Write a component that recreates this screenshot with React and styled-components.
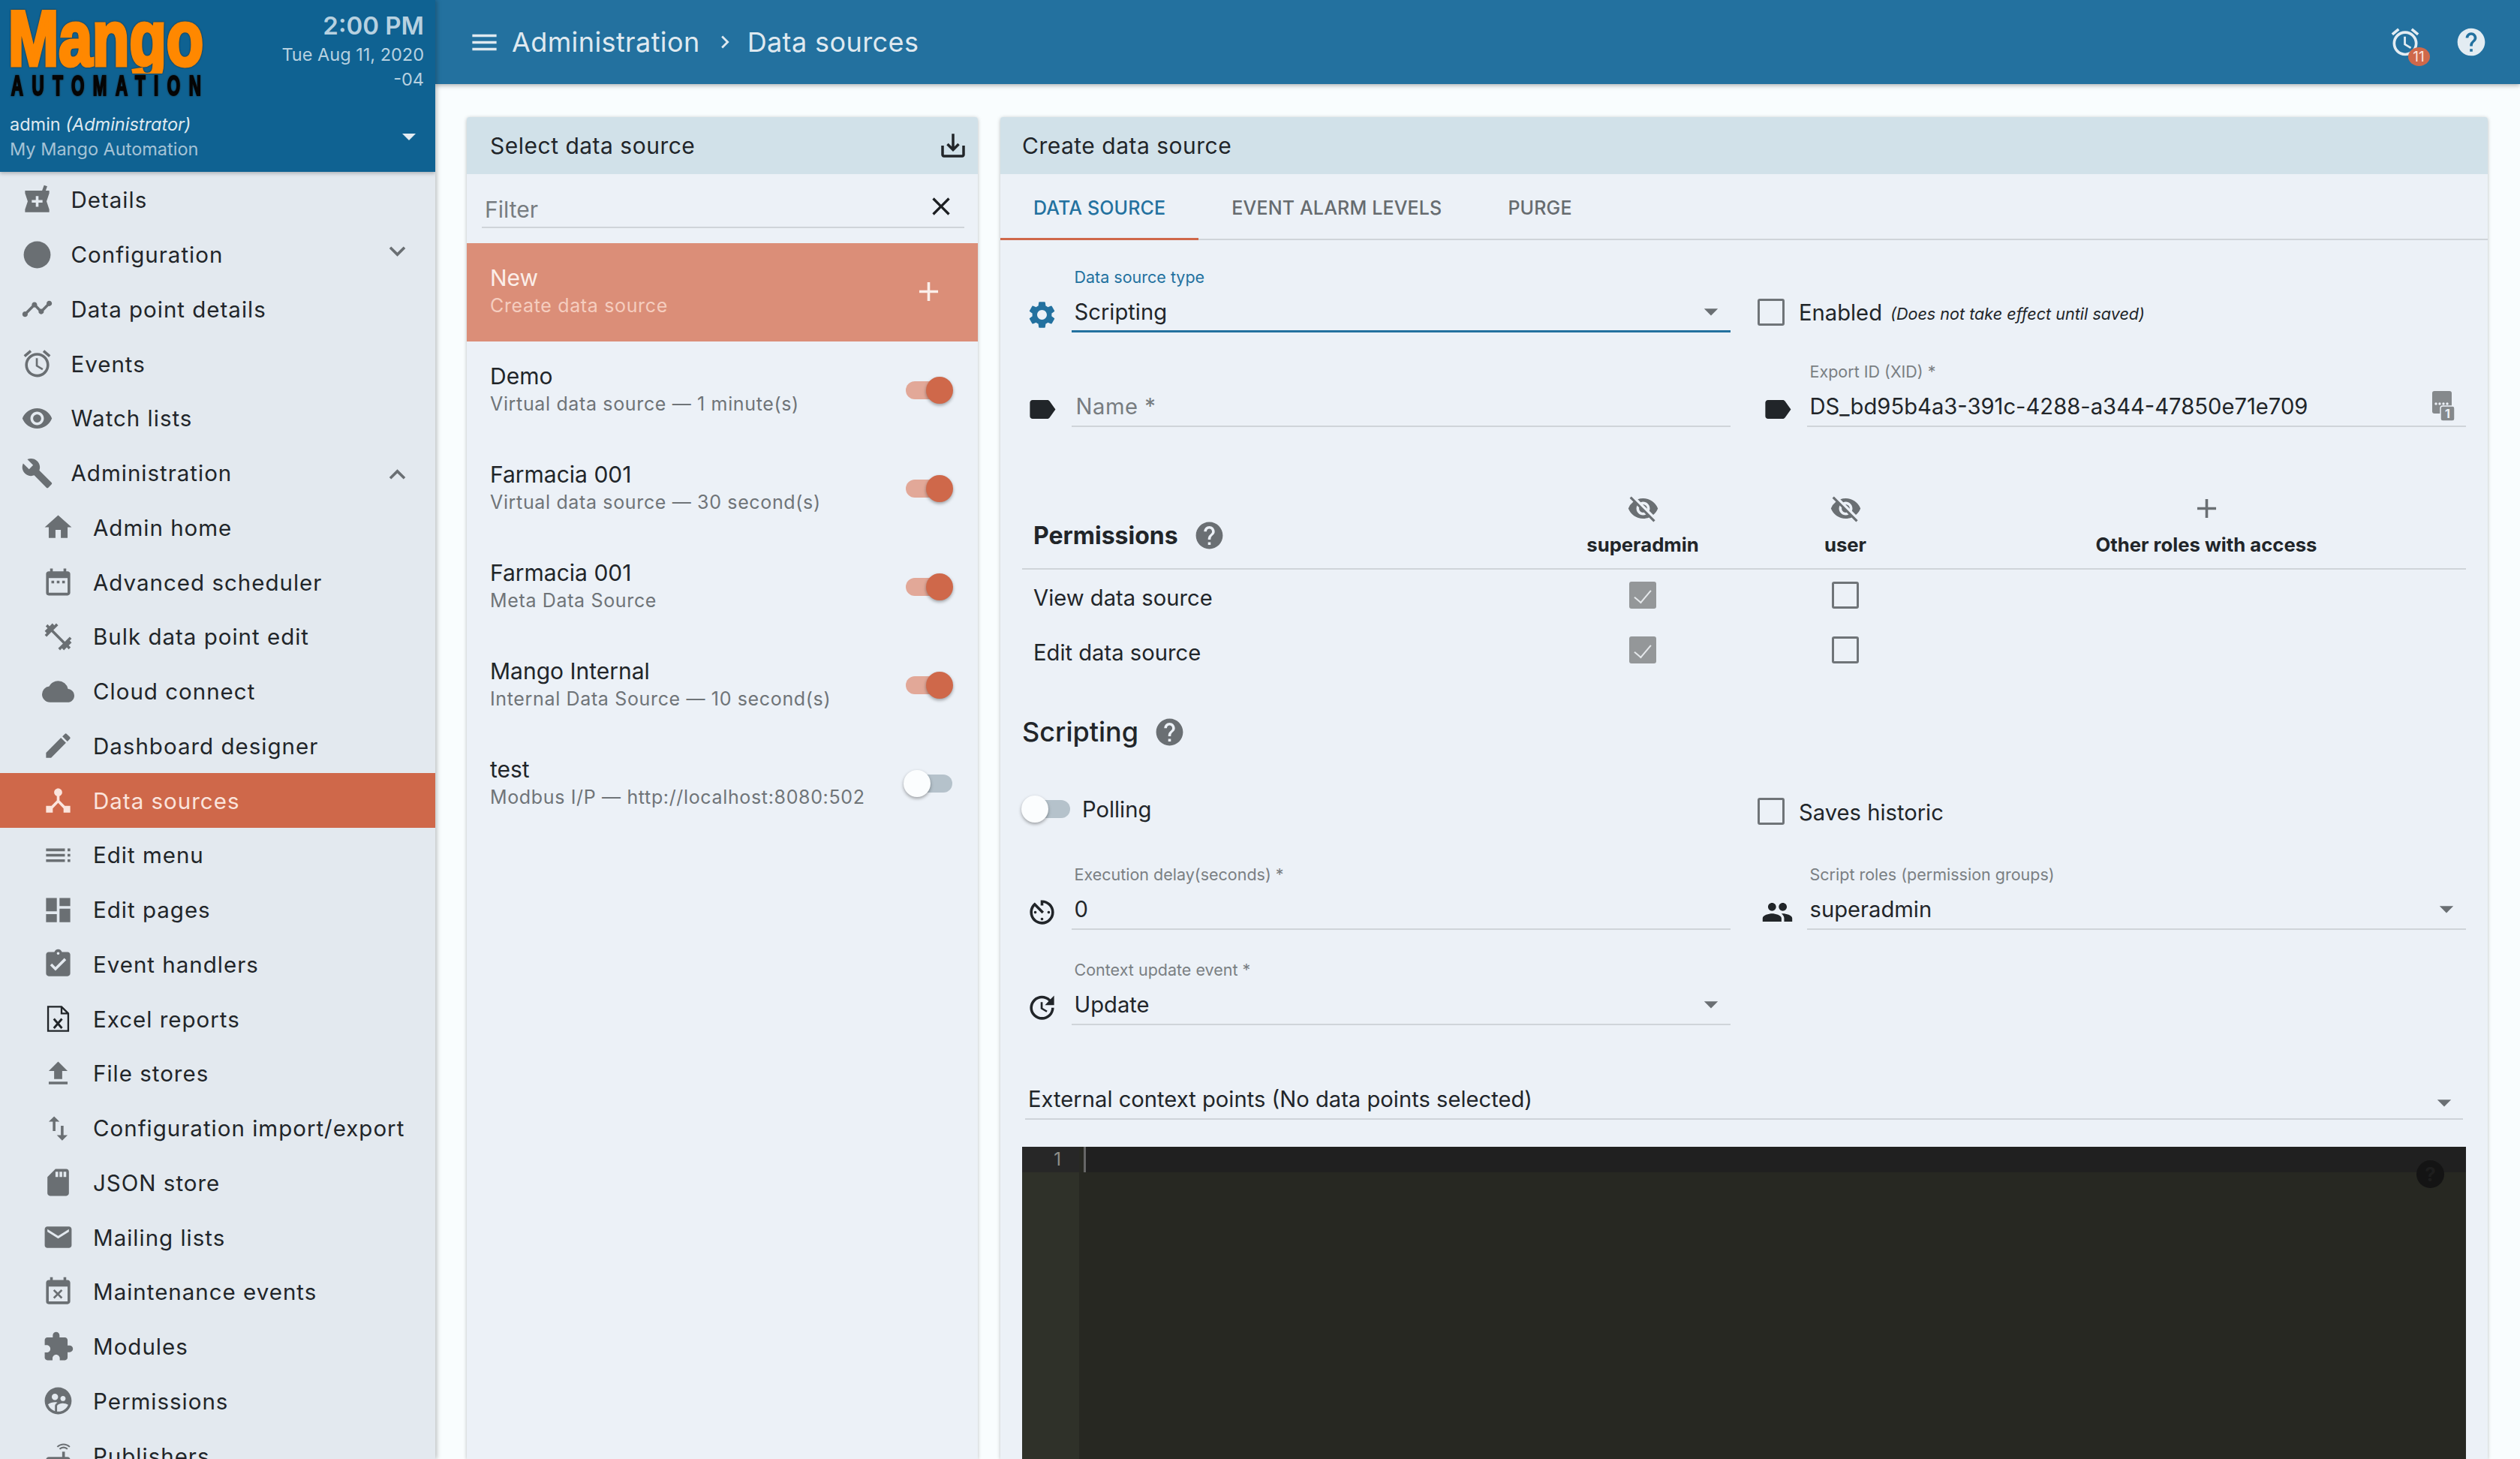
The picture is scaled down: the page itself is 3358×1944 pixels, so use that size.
import React from "react";
import styled, { createGlobalStyle } from "styled-components";
import {
  MdLocalPharmacy, MdLens, MdTimeline, MdAccessAlarm, MdRemoveRedEye, MdBuild, MdExpandMore, MdExpandLess,
  MdHome, MdDateRange, MdFitnessCenter, MdCloud, MdEdit, MdDeviceHub, MdToc, MdDashboard, MdAssignmentTurnedIn,
  MdFileUpload, MdImportExport, MdSdStorage, MdEmail, MdEventBusy, MdExtension, MdSupervisedUserCircle, MdRouter,
  MdMenu, MdChevronRight, MdHelp, MdSaveAlt, MdClose, MdAdd, MdSettings, MdLabel, MdVisibilityOff, MdAvTimer,
  MdUpdate, MdGroup, MdArrowDropDown,
} from "react-icons/md";

const GlobalStyle = createGlobalStyle`
  html, body { margin: 0; padding: 0; background: #f9fdfe; overflow: hidden; }
  * { box-sizing: border-box; }
  body { font-family: Inter, "Noto Sans", sans-serif; color: #212529; }
`;

const ExcelIcon = (props) => (
  <svg viewBox="0 0 24 24" width="1em" height="1em" {...props}>
    <path d="M4.5 3h10l5 5v13h-15z M14.5 3v5h5" fill="none" stroke="#212529" strokeWidth="1.3" />
    <path d="M8.8 12l6 7M14.8 12l-6 7" stroke="#212529" strokeWidth="1.6" fill="none" />
  </svg>
);

const XidIcon = () => (
  <svg viewBox="0 0 32 40" width="32" height="40">
    <rect x="0" y="0" width="26" height="30" rx="3" fill="#85898c" />
    <circle cx="5" cy="17" r="1.7" fill="#ecf1f7" />
    <circle cx="10" cy="17" r="1.7" fill="#ecf1f7" />
    <circle cx="15" cy="17" r="1.7" fill="#ecf1f7" />
    <circle cx="20" cy="17" r="1.7" fill="#ecf1f7" />
    <rect x="11" y="20" width="19" height="20" rx="3" fill="#85898c" stroke="#ecf1f7" strokeWidth="1.5" />
    <text x="20.5" y="36" fontFamily="Inter, sans-serif" fontWeight="700" fontSize="16" fill="#ecf1f7" textAnchor="middle">1</text>
  </svg>
);

const Logo = () => (
  <LogoSvg viewBox="0 0 270 125" width="270" height="125">
    <defs>
      <clipPath id="mango-clip">
        <rect x="-5" y="-5" width="280" height="92" rx="6" />
      </clipPath>
    </defs>
    <g clipPath="url(#mango-clip)">
      <text x="-2" y="76" fontFamily="Liberation Sans, sans-serif" fontWeight="700" fontSize="104" textLength="260" lengthAdjust="spacingAndGlyphs" fill="#ff8800" stroke="#ff8800" strokeWidth="5">Mango</text>
    </g>
    <g transform="scale(0.62,1)">
      <text x="3" y="116" fontFamily="Liberation Sans, sans-serif" fontWeight="700" fontSize="36" textLength="408" lengthAdjust="spacing" fill="#050505" stroke="#050505" strokeWidth="2">AUTOMATION</text>
    </g>
  </LogoSvg>
);

const navItems = [
  { icon: MdLocalPharmacy, label: "Details" },
  { icon: MdLens, label: "Configuration", chevron: "down" },
  { icon: MdTimeline, label: "Data point details" },
  { icon: MdAccessAlarm, label: "Events" },
  { icon: MdRemoveRedEye, label: "Watch lists" },
  { icon: MdBuild, label: "Administration", chevron: "up" },
  { icon: MdHome, label: "Admin home", sub: true },
  { icon: MdDateRange, label: "Advanced scheduler", sub: true },
  { icon: MdFitnessCenter, label: "Bulk data point edit", sub: true },
  { icon: MdCloud, label: "Cloud connect", sub: true },
  { icon: MdEdit, label: "Dashboard designer", sub: true },
  { icon: MdDeviceHub, label: "Data sources", sub: true, active: true },
  { icon: MdToc, label: "Edit menu", sub: true },
  { icon: MdDashboard, label: "Edit pages", sub: true },
  { icon: MdAssignmentTurnedIn, label: "Event handlers", sub: true },
  { icon: ExcelIcon, label: "Excel reports", sub: true },
  { icon: MdFileUpload, label: "File stores", sub: true },
  { icon: MdImportExport, label: "Configuration import/export", sub: true },
  { icon: MdSdStorage, label: "JSON store", sub: true },
  { icon: MdEmail, label: "Mailing lists", sub: true },
  { icon: MdEventBusy, label: "Maintenance events", sub: true },
  { icon: MdExtension, label: "Modules", sub: true },
  { icon: MdSupervisedUserCircle, label: "Permissions", sub: true },
  { icon: MdRouter, label: "Publishers", sub: true },
];

const sources = [
  { name: "Demo", desc: "Virtual data source — 1 minute(s)", on: true },
  { name: "Farmacia 001", desc: "Virtual data source — 30 second(s)", on: true },
  { name: "Farmacia 001", desc: "Meta Data Source", on: true },
  { name: "Mango Internal", desc: "Internal Data Source — 10 second(s)", on: true },
  { name: "test", desc: "Modbus I/P — http://localhost:8080:502", on: false },
];

const Field = ({ icon: Icon, iconColor, label, value, placeholder, arrow, focused, trailing }) => (
  <FieldWrap>
    <FieldIcon $color={iconColor}><Icon /></FieldIcon>
    <FieldBody $focused={focused}>
      <FieldLabel $focused={focused}>{label}</FieldLabel>
      <FieldValue $placeholder={!!placeholder}>
        <span>{value || placeholder}</span>
        {arrow && <DropArrow><MdArrowDropDown /></DropArrow>}
        {trailing}
      </FieldValue>
    </FieldBody>
  </FieldWrap>
);

const App = () => (
  <>
    <GlobalStyle />
    <Shell>
      <Sidebar>
        <SideHeader>
          <LogoRow>
            <Logo />
            <Clock>
              <Time>2:00 PM</Time>
              <DateText>Tue Aug 11, 2020</DateText>
              <DateText>-04</DateText>
            </Clock>
          </LogoRow>
          <UserRow>
            <div>
              <UserName>admin <em>(Administrator)</em></UserName>
              <SiteName>My Mango Automation</SiteName>
            </div>
            <UserCaret />
          </UserRow>
        </SideHeader>
        <Nav>
          {navItems.map(({ icon: Icon, label, sub, active, chevron }) => (
            <NavRow key={label} $sub={sub} $active={active}>
              <NavIcon $sub={sub} $active={active}><Icon /></NavIcon>
              <span>{label}</span>
              {chevron && <NavChevron $up={chevron === "up"}>{chevron === "up" ? <MdExpandLess /> : <MdExpandMore />}</NavChevron>}
            </NavRow>
          ))}
        </Nav>
      </Sidebar>

      <Main>
        <Toolbar>
          <MenuIcon><MdMenu /></MenuIcon>
          <Crumb>Administration</Crumb>
          <CrumbSep><MdChevronRight /></CrumbSep>
          <Crumb>Data sources</Crumb>
          <ToolbarRight>
            <AlarmButton>
              <MdAccessAlarm />
              <AlarmBadge>11</AlarmBadge>
            </AlarmButton>
            <HelpButton><MdHelp /></HelpButton>
          </ToolbarRight>
        </Toolbar>

        <Content>
          <Panel>
            <PanelHeader>
              <span>Select data source</span>
              <HeaderAction><MdSaveAlt /></HeaderAction>
            </PanelHeader>
            <FilterRow>
              <FilterText>Filter</FilterText>
              <FilterClear><MdClose /></FilterClear>
            </FilterRow>
            <NewRow>
              <SourceText>
                <NewName>New</NewName>
                <NewDesc>Create data source</NewDesc>
              </SourceText>
              <NewPlus><MdAdd /></NewPlus>
            </NewRow>
            {sources.map((s) => (
              <SourceRow key={s.name + s.desc}>
                <SourceText>
                  <SourceName>{s.name}</SourceName>
                  <SourceDesc>{s.desc}</SourceDesc>
                </SourceText>
                <Toggle $on={s.on} />
              </SourceRow>
            ))}
          </Panel>

          <Panel>
            <PanelHeader $wide>
              <span>Create data source</span>
            </PanelHeader>
            <Tabs>
              <Tab $active>Data source</Tab>
              <Tab>Event alarm levels</Tab>
              <Tab>Purge</Tab>
            </Tabs>
            <Form>
              <TwoCols>
                <Field icon={MdSettings} iconColor="#23719f" label="Data source type" value="Scripting" arrow focused />
                <CheckRow>
                  <Check />
                  <CheckLabel>Enabled</CheckLabel>
                  <CheckNote>(Does not take effect until saved)</CheckNote>
                </CheckRow>
              </TwoCols>
              <NameRow>
                <Field icon={MdLabel} placeholder="Name *" />
                <Field icon={MdLabel} label="Export ID (XID) *" value="DS_bd95b4a3-391c-4288-a344-47850e71e709" trailing={<XidButton><XidIcon /></XidButton>} />
              </NameRow>

              <PermTable>
                <PermHead>
                  <PermTitle>Permissions <HelpMark><MdHelp /></HelpMark></PermTitle>
                  <RoleHead><RoleIcon><MdVisibilityOff /></RoleIcon>superadmin</RoleHead>
                  <RoleHead><RoleIcon><MdVisibilityOff /></RoleIcon>user</RoleHead>
                  <RoleHead><RoleIcon><MdAdd /></RoleIcon>Other roles with access</RoleHead>
                </PermHead>
                <PermRow>
                  <span>View data source</span>
                  <PermCell><Check $checked /></PermCell>
                  <PermCell><Check /></PermCell>
                </PermRow>
                <PermRow>
                  <span>Edit data source</span>
                  <PermCell><Check $checked /></PermCell>
                  <PermCell><Check /></PermCell>
                </PermRow>
              </PermTable>

              <SectionTitle>Scripting <HelpMark><MdHelp /></HelpMark></SectionTitle>

              <PollingRow>
                <PollingCell>
                  <FormToggle />
                  <span>Polling</span>
                </PollingCell>
                <SavesCell>
                  <Check />
                  <CheckLabel>Saves historic</CheckLabel>
                </SavesCell>
              </PollingRow>

              <DelayRow>
                <Field icon={MdAvTimer} label="Execution delay(seconds) *" value="0" />
                <Field icon={MdGroup} label="Script roles (permission groups)" value="superadmin" arrow />
              </DelayRow>
              <ContextRow>
                <Field icon={MdUpdate} label="Context update event *" value="Update" arrow />
              </ContextRow>

              <ExternalRow>
                <span>External context points (No data points selected)</span>
                <ExternalArrow><MdArrowDropDown /></ExternalArrow>
              </ExternalRow>

              <Editor>
                <Gutter>
                  <GutterActive>1</GutterActive>
                </Gutter>
                <EditorBody>
                  <ActiveLine />
                  <EditorHelp>?</EditorHelp>
                </EditorBody>
              </Editor>
            </Form>
          </Panel>
        </Content>
      </Main>
    </Shell>
  </>
);

export default App;

const Shell = styled.div`
  display: grid;
  grid-template-columns: 580px 1fr;
  width: 3358px;
  height: 1944px;
  overflow: hidden;
`;

const Sidebar = styled.aside`
  background: #e3e9ef;
  box-shadow: 2px 0 6px rgba(0, 0, 0, 0.25);
  z-index: 3;
  overflow: hidden;
`;

const SideHeader = styled.header`
  height: 229px;
  background: #0f6292;
  box-shadow: 0 2px 5px rgba(0, 0, 0, 0.25);
  position: relative;
  padding: 11px 15px 0 13px;
`;

const LogoRow = styled.div`
  display: flex;
  justify-content: space-between;
  height: 138px;
`;

const LogoSvg = styled.svg`
  display: block;
  flex: none;
  filter: drop-shadow(0 0 1px rgba(30, 30, 30, 0.8));
`;

const Clock = styled.div`
  text-align: right;
  padding-top: 3px;
`;

const Time = styled.div`
  font-size: 33px;
  line-height: 40px;
  font-weight: 600;
  color: #b7d1e0;
  margin-bottom: 2px;
`;

const DateText = styled.div`
  font-size: 23.5px;
  line-height: 33px;
  color: #b7d1e0;
`;

const UserRow = styled.div`
  display: flex;
  justify-content: space-between;
  align-items: center;
  padding-right: 11px;
`;

const UserName = styled.div`
  font-size: 23.5px;
  line-height: 33px;
  color: #dfe9f0;
`;

const SiteName = styled.div`
  font-size: 23.5px;
  line-height: 33px;
  color: #a5c3d6;
`;

const UserCaret = styled.div`
  width: 0;
  height: 0;
  border-left: 9px solid transparent;
  border-right: 9px solid transparent;
  border-top: 9px solid #e3ecf2;
`;

const Nav = styled.nav`
  display: flex;
  flex-direction: column;
  padding-top: 1px;
`;

const NavRow = styled.div`
  flex: none;
  height: 72.75px;
  display: flex;
  align-items: center;
  position: relative;
  padding-left: ${(p) => (p.$sub ? "55.5px" : "27.5px")};
  font-size: 29.5px;
  letter-spacing: 1px;
  background: ${(p) => (p.$active ? "#cf684a" : "transparent")};
  color: ${(p) => (p.$active ? "#fbe4dc" : "#212529")};
`;

const NavIcon = styled.span`
  flex: none;
  width: 43px;
  height: 43px;
  margin-right: ${(p) => (p.$sub ? "25.5px" : "24px")};
  font-size: 43px;
  display: flex;
  color: ${(p) => (p.$active ? "#fbe4dc" : "#6a6f73")};
`;

const NavChevron = styled.span`
  position: absolute;
  left: 508px;
  top: ${(p) => (p.$up ? "17px" : "10px")};
  font-size: 43px;
  color: #6a6f73;
  display: flex;
`;

const Main = styled.main`
  display: flex;
  flex-direction: column;
  min-width: 0;
  height: 1944px;
`;

const Toolbar = styled.div`
  flex: none;
  height: 112px;
  background: #23719f;
  box-shadow: 0 2px 6px rgba(0, 0, 0, 0.3);
  z-index: 2;
  display: flex;
  align-items: center;
  padding-left: 44px;
  color: #dfe9f0;
  font-size: 36px;
`;

const MenuIcon = styled.span`
  font-size: 43px;
  display: flex;
  margin-right: 15px;
`;

const Crumb = styled.span`
  letter-spacing: 0.4px;
`;

const CrumbSep = styled.span`
  font-size: 34px;
  display: flex;
  margin: 0 13px 0 16px;
`;

const ToolbarRight = styled.div`
  margin-left: auto;
  display: flex;
  align-items: center;
  gap: 44px;
  padding-right: 43px;
`;

const AlarmButton = styled.span`
  position: relative;
  display: flex;
  font-size: 44px;
  color: #e3ecf2;
`;

const AlarmBadge = styled.span`
  position: absolute;
  left: 25.5px;
  top: 29px;
  width: 29px;
  height: 25px;
  border-radius: 50%;
  background: #cf684a;
  color: #fbe4dc;
  font-size: 19px;
  line-height: 25px;
  text-align: center;
`;

const HelpButton = styled.span`
  display: flex;
  font-size: 44px;
  color: #e3ecf2;
`;

const Content = styled.div`
  flex: 1;
  min-height: 0;
  display: grid;
  grid-template-columns: 681px 1fr;
  gap: 30px;
  padding: 44px 43px 0 42px;
  background: #f9fdfe;
`;

const Panel = styled.section`
  background: #ecf1f7;
  border-radius: 4px 4px 0 0;
  box-shadow: 0 1px 5px rgba(0, 0, 0, 0.25);
  overflow: hidden;
`;

const PanelHeader = styled.div`
  height: 76px;
  background: #d1e1e9;
  display: flex;
  align-items: center;
  justify-content: space-between;
  padding: 0 12px 0 ${(p) => (p.$wide ? "29px" : "31px")};
  font-size: 30px;
  letter-spacing: 0.5px;
`;

const HeaderAction = styled.span`
  font-size: 42px;
  display: flex;
`;

const FilterRow = styled.div`
  height: 72px;
  margin: 0 18px 20px 20px;
  padding: 0 11px 0 4px;
  display: flex;
  align-items: center;
  justify-content: space-between;
  border-bottom: 2px solid #cfd4d9;
`;

const FilterText = styled.span`
  font-size: 30px;
  color: #777c80;
  margin-top: 24px;
`;

const FilterClear = styled.span`
  font-size: 40px;
  display: flex;
  color: #1c1f22;
  margin-top: 16px;
`;

const SourceRow = styled.div`
  height: 131px;
  display: flex;
  align-items: center;
  justify-content: space-between;
  padding: 0 34px 2px 31px;
`;

const SourceText = styled.div`
  margin-bottom: 2px;
`;

const NewRow = styled(SourceRow)`
  background: #db8e78;
  color: #fff;
`;

const NewName = styled.div`
  font-size: 30px;
  line-height: 38px;
  color: #fbeee9;
`;

const NewDesc = styled.div`
  font-size: 25px;
  line-height: 36px;
  letter-spacing: 0.65px;
  color: #f5cdbf;
`;

const NewPlus = styled.span`
  font-size: 43px;
  display: flex;
  color: #fbeee9;
  margin-right: 10px;
`;

const SourceName = styled.div`
  font-size: 30px;
  line-height: 38px;
`;

const SourceDesc = styled.div`
  font-size: 25px;
  line-height: 36px;
  letter-spacing: 0.65px;
  color: #6f7478;
`;

const Toggle = styled.span`
  position: relative;
  flex: none;
  width: 62px;
  height: 24px;
  border-radius: 12px;
  background: ${(p) => (p.$on ? "#e2a898" : "#b5c2cb")};
  &::after {
    content: "";
    position: absolute;
    top: -6px;
    left: ${(p) => (p.$on ? "27px" : "-3px")};
    width: 36px;
    height: 36px;
    border-radius: 50%;
    background: ${(p) => (p.$on ? "#cf684a" : "#fbfdfe")};
    box-shadow: 0 2px 4px rgba(0, 0, 0, 0.35);
  }
`;

const FormToggle = styled(Toggle)`
  width: 62px;
  margin: 0 16px 0 2px;
`;

const Tabs = styled.div`
  height: 88px;
  display: flex;
  border-bottom: 2px solid #cfd4d9;
`;

const Tab = styled.div`
  height: 88px;
  padding: 4px 44px 0;
  display: flex;
  align-items: center;
  text-transform: uppercase;
  font-size: 25px;
  font-weight: 500;
  letter-spacing: 0.15px;
  color: ${(p) => (p.$active ? "#23719f" : "#666b6f")};
  border-bottom: 3px solid ${(p) => (p.$active ? "#cf684a" : "transparent")};
`;

const Form = styled.div`
  padding: 36px 29px 0;
`;

const TwoCols = styled.div`
  display: grid;
  grid-template-columns: 1fr 1fr;
  column-gap: 36px;
  align-items: start;
`;

const NameRow = styled(TwoCols)`
  margin-top: 39px;
`;

const DelayRow = styled(TwoCols)`
  margin-top: 50px;
`;

const ContextRow = styled(TwoCols)`
  margin-top: 40px;
`;

const FieldWrap = styled.div`
  display: grid;
  grid-template-columns: 52px 1fr;
  column-gap: 14px;
  height: 87px;
`;

const FieldIcon = styled.span`
  align-self: end;
  font-size: 43px;
  height: 43px;
  margin-bottom: 2px;
  display: flex;
  justify-content: center;
  color: ${(p) => p.$color || "#212529"};
`;

const FieldBody = styled.div`
  border-bottom: ${(p) => (p.$focused ? "3px solid #23719f" : "2px solid #cfd4d9")};
  padding: 0 4px 0 3.5px;
  position: relative;
`;

const FieldLabel = styled.div`
  height: 26px;
  margin-bottom: 12px;
  font-size: 21.5px;
  line-height: 26px;
  color: ${(p) => (p.$focused ? "#23719f" : "#7a7f83")};
`;

const FieldValue = styled.div`
  height: 42px;
  display: flex;
  align-items: center;
  justify-content: space-between;
  font-size: 29.2px;
  letter-spacing: ${(p) => (p.$placeholder ? "0.5px" : "0")};
  padding-left: ${(p) => (p.$placeholder ? "2px" : "0")};
  color: ${(p) => (p.$placeholder ? "#777c80" : "#212529")};
`;

const DropArrow = styled.span`
  display: flex;
  font-size: 44px;
  color: #6a6f73;
  margin-right: 0;
`;

const ExternalArrow = styled(DropArrow)`
  margin-right: 3px;
`;

const XidButton = styled.span`
  display: flex;
  margin-right: 9px;
  margin-top: 0;
`;

const CheckRow = styled.div`
  display: flex;
  align-items: center;
  padding-top: 39px;
  line-height: 36px;
`;

const Check = styled.span`
  flex: none;
  width: 36px;
  height: 36px;
  border-radius: 3px;
  position: relative;
  border: ${(p) => (p.$checked ? "none" : "3px solid #6f7478")};
  background: ${(p) => (p.$checked ? "#949799" : "transparent")};
  ${(p) =>
    p.$checked &&
    `&::after {
      content: "";
      position: absolute;
      left: 12px;
      top: 6px;
      width: 10px;
      height: 20px;
      border: solid #e6e9ec;
      border-width: 0 2px 2px 0;
      transform: rotate(40deg);
    }`}
`;

const CheckLabel = styled.span`
  margin-left: 19px;
  margin-top: 3px;
  font-size: 29.2px;
`;

const CheckNote = styled.span`
  margin-left: 11px;
  margin-top: 5px;
  font-size: 21.6px;
  font-style: italic;
`;

const PermTable = styled.div`
  margin-top: 81px;
`;

const permGrid = `
  display: grid;
  grid-template-columns: 692px 270px 270px 692px;
`;

const PermHead = styled.div`
  ${permGrid}
  height: 109px;
  border-bottom: 2px solid #cfd4d9;
`;

const PermTitle = styled.div`
  display: flex;
  align-items: center;
  gap: 20px;
  padding: 20px 0 0 15px;
  font-size: 32px;
  font-weight: 700;
`;

const HelpMark = styled.span`
  display: flex;
  font-size: 43px;
  font-weight: 400;
  color: #6a6f73;
`;

const RoleHead = styled.div`
  display: flex;
  flex-direction: column;
  align-items: center;
  font-size: 25.7px;
  font-weight: 700;
`;

const RoleIcon = styled.span`
  display: flex;
  font-size: 43px;
  height: 54px;
  padding-top: 6px;
  color: #6a6f73;
  margin-bottom: 6px;
`;

const PermRow = styled.div`
  ${permGrid}
  height: 73px;
  align-items: center;
  font-size: 29.2px;
  & > span:first-child {
    padding-left: 15px;
    padding-top: 2px;
  }
`;

const PermCell = styled.div`
  display: flex;
  justify-content: center;
  margin-top: -5px;
`;

const SectionTitle = styled.div`
  margin-top: 45px;
  height: 50px;
  display: flex;
  align-items: center;
  gap: 20px;
  font-size: 36px;
  font-weight: 500;
`;

const PollingRow = styled(TwoCols)`
  margin-top: 54px;
  height: 48px;
  align-items: center;
`;

const PollingCell = styled.div`
  display: flex;
  align-items: center;
  font-size: 29.2px;
`;

const SavesCell = styled(PollingCell)`
  margin-top: 6px;
`;

const ExternalRow = styled.div`
  margin-top: 79px;
  margin-left: 4px;
  margin-right: 4px;
  height: 47px;
  padding: 2px 0 0 4px;
  display: flex;
  align-items: flex-start;
  justify-content: space-between;
  font-size: 29.2px;
  border-bottom: 2px solid #cfd4d9;
`;

const Editor = styled.div`
  margin-top: 36px;
  height: 500px;
  display: grid;
  grid-template-columns: 76px 1fr;
  background: #272822;
`;

const Gutter = styled.div`
  background: #2f3129;
`;

const GutterActive = styled.div`
  height: 34px;
  background: #272727;
  color: #8f908a;
  font-size: 24px;
  line-height: 34px;
  text-align: right;
  padding-right: 24px;
`;

const EditorBody = styled.div`
  position: relative;
`;

const ActiveLine = styled.div`
  height: 34px;
  background: #202020;
  border-left: 3px solid #666;
  margin-left: 6px;
`;

const EditorHelp = styled.span`
  position: absolute;
  right: 29px;
  top: 18px;
  width: 37px;
  height: 37px;
  border-radius: 50%;
  background: #141414;
  color: #1e1e1e;
  font-size: 26px;
  font-weight: 700;
  line-height: 37px;
  text-align: center;
`;
